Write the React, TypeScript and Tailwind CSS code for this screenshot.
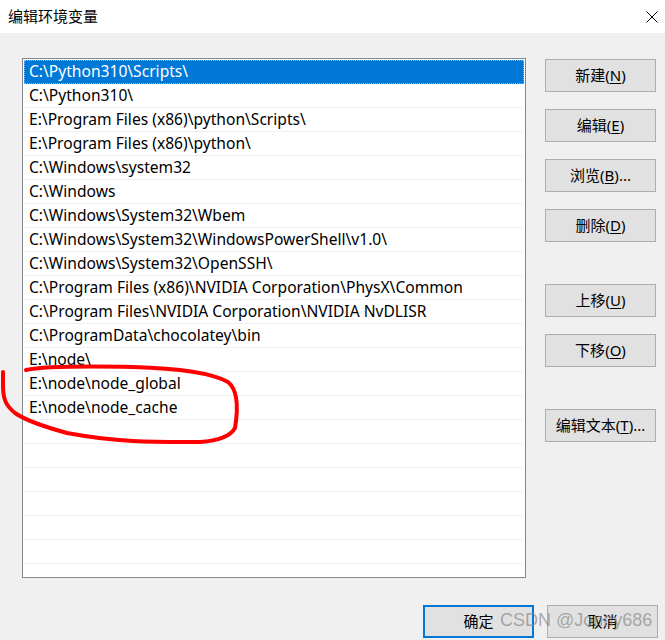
import React from "react";

const paths = [
  "C:\\Python310\\Scripts\\",
  "C:\\Python310\\",
  "E:\\Program Files (x86)\\python\\Scripts\\",
  "E:\\Program Files (x86)\\python\\",
  "C:\\Windows\\system32",
  "C:\\Windows",
  "C:\\Windows\\System32\\Wbem",
  "C:\\Windows\\System32\\WindowsPowerShell\\v1.0\\",
  "C:\\Windows\\System32\\OpenSSH\\",
  "C:\\Program Files (x86)\\NVIDIA Corporation\\PhysX\\Common",
  "C:\\Program Files\\NVIDIA Corporation\\NVIDIA NvDLISR",
  "C:\\ProgramData\\chocolatey\\bin",
  "E:\\node\\",
  "E:\\node\\node_global",
  "E:\\node\\node_cache",
];

const TOTAL_ROWS = 22;

function DlgButton({ label, hotkey, suffix = "" }: { label: string; hotkey: string; suffix?: string }) {
  return (
    <button className="h-[33px] w-[111px] border border-[#adadad] bg-[#e1e1e1] text-[15px] text-black">
      {label}(<span className="underline underline-offset-2">{hotkey}</span>){suffix}
    </button>
  );
}

export default function App() {
  const rows = Array.from({ length: TOTAL_ROWS }, (_, i) => paths[i] ?? "");

  return (
    <div
      className="relative h-[640px] w-[665px] overflow-hidden bg-[#f0f0f0]"
      style={{ fontFamily: '"Noto Sans", "Noto Sans CJK SC", sans-serif' }}
    >
      {/* Title bar */}
      <div className="flex h-[33px] items-center justify-between bg-white pl-[8px] pr-[6px]">
        <span className="text-[15px] text-black">编辑环境变量</span>
        <svg width="12" height="12" viewBox="0 0 12 12" className="mr-[1px]">
          <path d="M0.5 0.5 L11.5 11.5 M11.5 0.5 L0.5 11.5" stroke="#000" strokeWidth="1" />
        </svg>
      </div>

      {/* Body */}
      <div className="flex flex-col pl-[22px] pt-[25px]">
        <div className="flex gap-[19px]">
          {/* List */}
          <div className="h-[520px] w-[504px] overflow-hidden border border-[#828790] bg-white p-[1px]">
            {rows.map((p, i) => (
              <div
                key={i}
                className={
                  i === 0
                    ? "flex h-[24px] items-center whitespace-nowrap border border-dotted border-[#7fb8ea] bg-[#0078d7] pl-[4px] text-[15.6px] text-white"
                    : "flex h-[24px] items-center whitespace-nowrap border-b border-[#f0f0f0] pl-[5px] text-[15.6px] text-black"
                }
              >
                {p}
              </div>
            ))}
          </div>

          {/* Side buttons */}
          <div className="flex flex-col pt-[1px]">
            <div className="flex flex-col gap-[17px]">
              <DlgButton label="新建" hotkey="N" />
              <DlgButton label="编辑" hotkey="E" />
              <DlgButton label="浏览" hotkey="B" suffix="..." />
              <DlgButton label="删除" hotkey="D" />
            </div>
            <div className="mt-[42px] flex flex-col gap-[17px]">
              <DlgButton label="上移" hotkey="U" />
              <DlgButton label="下移" hotkey="O" />
            </div>
            <div className="mt-[42px]">
              <DlgButton label="编辑文本" hotkey="T" suffix="..." />
            </div>
          </div>
        </div>

        {/* Bottom buttons */}
        <div className="mt-[27px] flex gap-[13px] pl-[401px]">
          <button className="h-[33px] w-[111px] border-2 border-[#0078d7] bg-[#e1e1e1] text-[15px] text-black">
            确定
          </button>
          <button className="h-[33px] w-[111px] border border-[#adadad] bg-[#e1e1e1] text-[15px] text-black">
            取消
          </button>
        </div>
      </div>

      {/* Red hand-drawn annotation */}
      <svg className="pointer-events-none absolute left-0 top-0" width="665" height="640">
        <path
          d="M26 370 C40 367 80 366 133 367 C170 368 210 372 228 382 C238 390 238 410 235 428 C230 437 215 441 200 442 C160 442 120 443 67 433 C45 427 25 420 15 413 C5 405 3 398 3 385 L3 372"
          fill="none"
          stroke="#ff0000"
          strokeWidth="4"
          strokeLinecap="round"
          strokeLinejoin="round"
        />
      </svg>

      {/* Watermark */}
      <div
        className="pointer-events-none absolute left-[500px] top-[607px] whitespace-nowrap text-[18px] leading-[26px] text-[#8a8a8a]/70"
        style={{ fontFamily: '"Liberation Sans", sans-serif' }}
      >
        CSDN @Jonny686
      </div>
    </div>
  );
}
